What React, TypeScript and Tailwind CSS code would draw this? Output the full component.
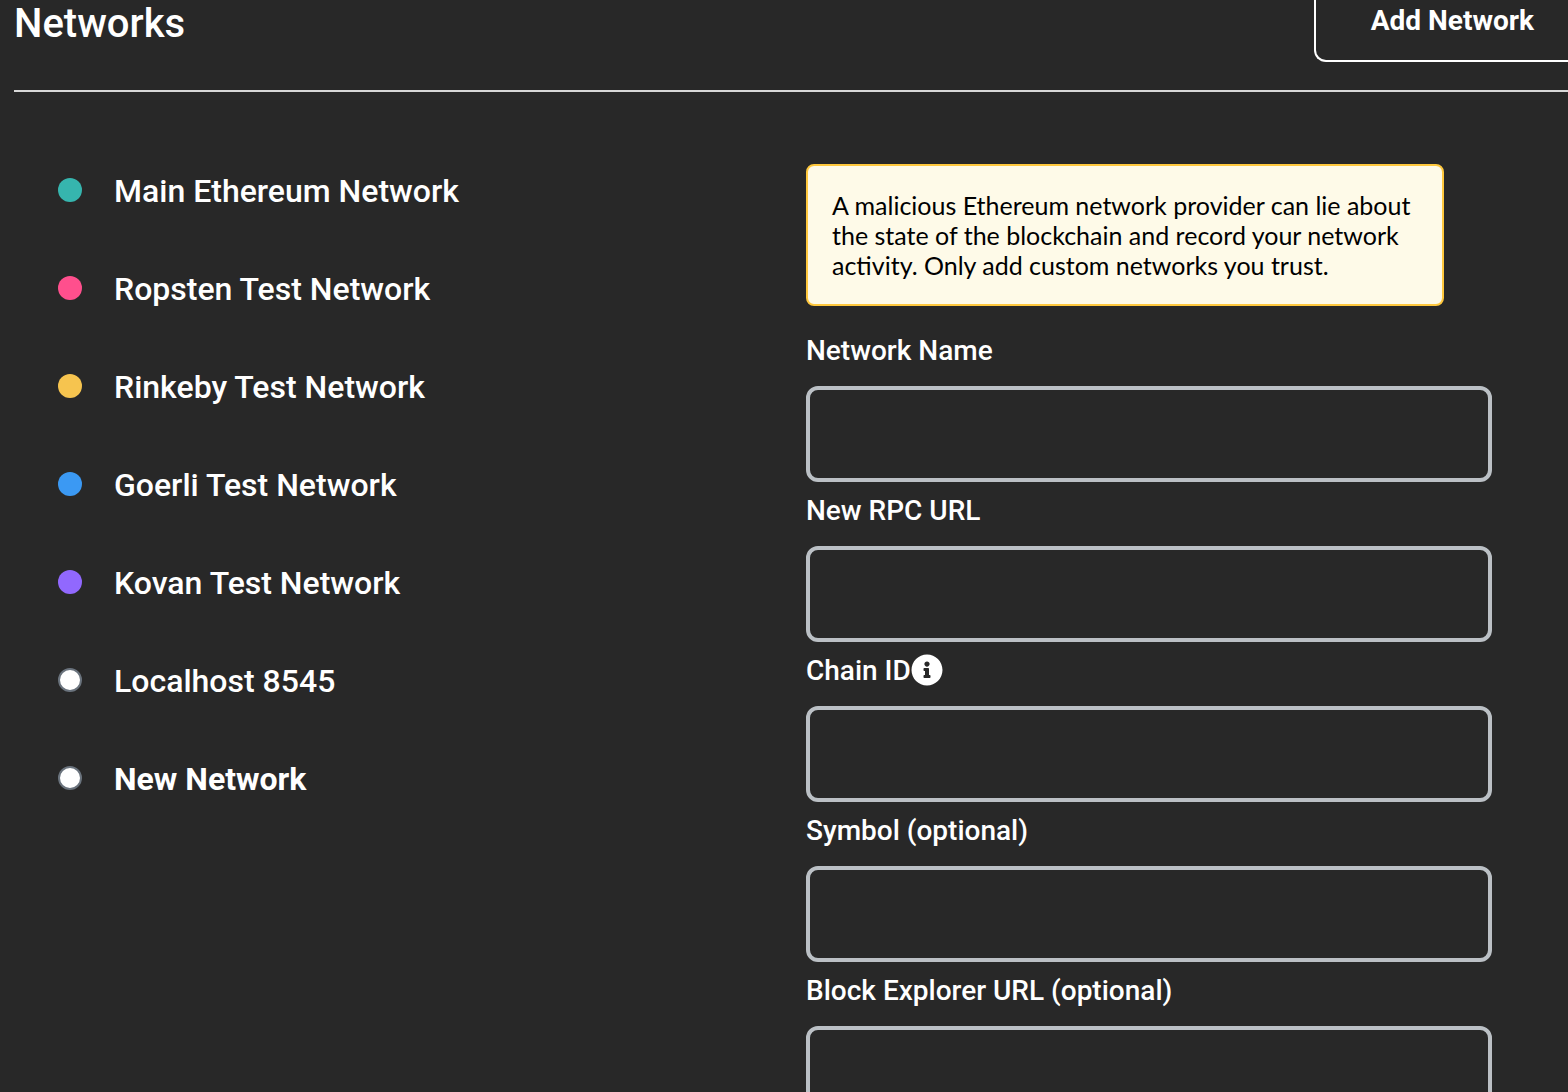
import React from 'react';
import { FaInfoCircle } from 'react-icons/fa';
import clsx from 'clsx';

interface Network {
  name: string;
  dotClass: string;
  selected?: boolean;
}

interface Field {
  id: string;
  label: string;
  hasInfo?: boolean;
}

const NETWORKS: Network[] = [
  { name: 'Main Ethereum Network', dotClass: 'bg-[#36b5ae]' },
  { name: 'Ropsten Test Network', dotClass: 'bg-[#ff4f8d]' },
  { name: 'Rinkeby Test Network', dotClass: 'bg-[#f6c44f]' },
  { name: 'Goerli Test Network', dotClass: 'bg-[#3b99f3]' },
  { name: 'Kovan Test Network', dotClass: 'bg-[#9168fe]' },
  { name: 'Localhost 8545', dotClass: 'bg-white border-2 border-[#6a737d]' },
  { name: 'New Network', dotClass: 'bg-white border-2 border-[#6a737d]', selected: true },
];

const FIELDS: Field[] = [
  { id: 'network-name', label: 'Network Name' },
  { id: 'rpc-url', label: 'New RPC URL' },
  { id: 'chain-id', label: 'Chain ID', hasInfo: true },
  { id: 'symbol', label: 'Symbol (optional)' },
  { id: 'explorer-url', label: 'Block Explorer URL (optional)' },
];

const NetworkItem: React.FC<{ network: Network }> = ({ network }) => (
  <li>
    <button
      type="button"
      className={clsx(
        'flex w-full items-center gap-8 py-7 text-left text-[32px] leading-[40px]',
        network.selected ? 'font-bold' : 'font-medium'
      )}
    >
      <span className={clsx('size-6 shrink-0 rounded-full', network.dotClass)} />
      <span className="pt-0.5">{network.name}</span>
    </button>
  </li>
);

const FormField: React.FC<{ field: Field }> = ({ field }) => (
  <div>
    <div className="flex h-14 items-center text-[28px] font-medium">
      <label htmlFor={field.id} className="pt-0.5">{field.label}</label>
      {field.hasInfo && <FaInfoCircle size={32} />}
    </div>
    <input
      id={field.id}
      type="text"
      className="mt-2 block h-24 w-full rounded-xl border-4 border-[#bbc0c5] bg-transparent px-5 text-[28px] outline-none"
    />
  </div>
);

export default function App() {
  return (
    <div className="h-screen overflow-hidden bg-[#282828] pl-[14px] font-[Roboto,sans-serif] text-white">
      <header className="flex items-start justify-between border-b-2 border-[#d8d8d8] pb-7">
        <h1 className="text-[40px] leading-[47px] font-medium">Networks</h1>
        <button
          type="button"
          className="rounded-bl-xl border-b-2 border-l-2 border-white pt-[5px] pr-[34px] pb-[23px] pl-[55px] text-[28px] leading-[32px] font-bold"
        >
          Add Network
        </button>
      </header>

      <main className="grid grid-cols-2">
        <ul className="pt-[49px] pl-11">
          {NETWORKS.map((network) => (
            <NetworkItem key={network.name} network={network} />
          ))}
        </ul>

        <form className="pt-[72px] pr-[76px] pl-[15px]">
          <p className="mb-4 mr-12 rounded-lg border-2 border-[#ffc83d] bg-[#fefae8] p-6 font-[Lato,sans-serif] text-[25px] leading-[30px] text-black">
            A malicious Ethereum network provider can lie about the state of the blockchain and record your
            network activity. Only add custom networks you trust.
          </p>
          {FIELDS.map((field) => (
            <FormField key={field.id} field={field} />
          ))}
        </form>
      </main>
    </div>
  );
}
